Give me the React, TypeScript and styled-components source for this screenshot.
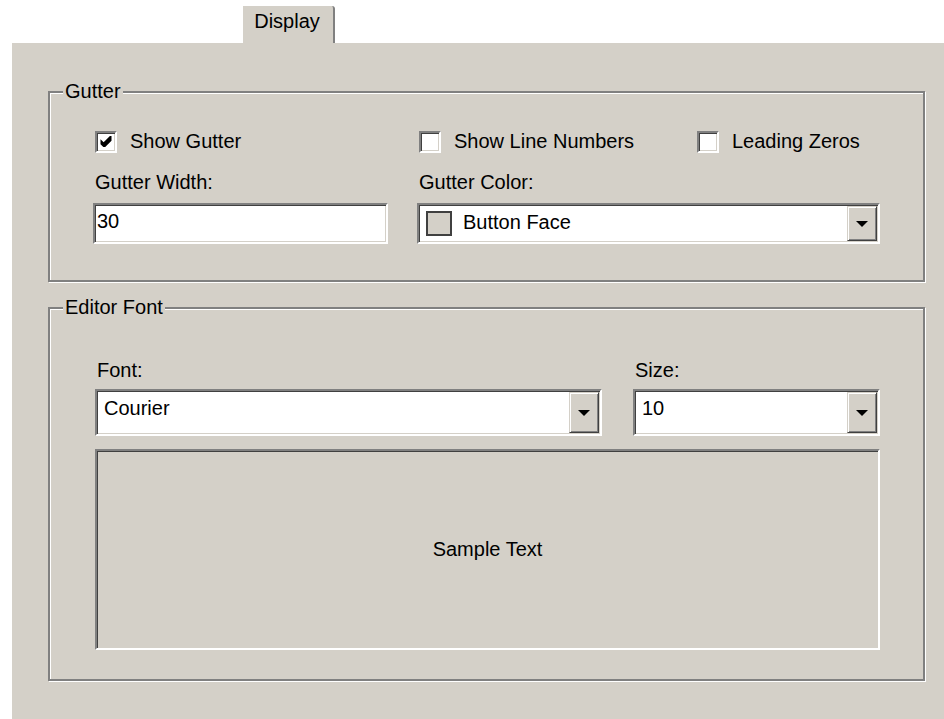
import React from "react";
import styled, { createGlobalStyle, css } from "styled-components";

const GlobalStyle = createGlobalStyle`
  html, body {
    margin: 0;
    padding: 0;
    background: #ffffff;
  }
  body {
    font-family: "Liberation Sans", Arial, sans-serif;
    font-size: 20px;
    color: #000000;
  }
`;

const FACE = "#d4d0c8";

/* Classic 3D sunken client edge: grey/black on top-left, white/face on bottom-right */
const sunken = css`
  box-sizing: border-box;
  border: 2px solid;
  border-color: #808080 #ffffff #ffffff #808080;
  box-shadow: inset 1px 1px 0 #404040, inset -1px -1px 0 ${FACE};
  padding: 1px;
`;

const Window = styled.div`
  width: 944px;
  height: 719px;
  display: flex;
  flex-direction: column;
  overflow: hidden;
  background: #ffffff;
`;

const TabStrip = styled.div`
  height: 43px;
  box-sizing: border-box;
  padding-left: 243px;
  display: flex;
  align-items: flex-end;
`;

const Tab = styled.div`
  width: 92px;
  height: 37px;
  box-sizing: border-box;
  background: ${FACE};
  border-right: 2px solid #808080;
  border-top-right-radius: 3px;
  padding-top: 4px;
  padding-right: 2px;
  line-height: 23px;
  text-align: center;
`;

const Panel = styled.div`
  flex: 1;
  margin-left: 12px;
  background: ${FACE};
  box-sizing: border-box;
  padding: 37px 0 0 36px;
  display: flex;
  flex-direction: column;
`;

const GroupBox = styled.fieldset<{ $gapTop?: number }>`
  width: 877px;
  box-sizing: border-box;
  margin: ${(p) => p.$gapTop ?? 0}px 0 0 0;
  padding: 0;
  min-width: 0;
  border: 2px solid #808080;
  box-shadow: inset 1px 1px 0 #ffffff, 1px 1px 0 #ffffff;
`;

const Caption = styled.legend`
  margin-left: 13px;
  padding: 0 2px;
  line-height: 23px;
  background: ${FACE};
`;

const GutterGrid = styled.div`
  display: grid;
  grid-template-columns: 324px 278px 185px;
  padding: 27px 0 36px 43px;
`;

const FontGrid = styled.div`
  display: grid;
  grid-template-columns: 507px 247px;
  column-gap: 31px;
  padding: 40px 0 29px 45px;
`;

const CheckItem = styled.label`
  display: flex;
  align-items: center;
  gap: 13px;
  height: 23px;
  margin-left: 2px;
  line-height: 23px;
  white-space: nowrap;
`;

const CheckBox = styled.span`
  ${sunken};
  width: 22px;
  height: 22px;
  background: #ffffff;
  display: flex;
  align-items: center;
  justify-content: center;
  flex: none;
`;

const FieldLabel = styled.div<{ $top?: number; $span?: boolean }>`
  line-height: 23px;
  margin: ${(p) => p.$top ?? 0}px 0 0 2px;
  ${(p) => p.$span && "grid-column: span 2;"}
`;

const EditBox = styled.div<{ $w: number }>`
  ${sunken};
  width: ${(p) => p.$w}px;
  height: 41px;
  margin-top: 9px;
  background: #ffffff;
  padding-top: 5px;
  line-height: 23px;
  padding-left: 2px;
`;

const Combo = styled.div<{ $h: number; $top: number; $span?: boolean }>`
  ${sunken};
  height: ${(p) => p.$h}px;
  margin-top: ${(p) => p.$top}px;
  background: #ffffff;
  display: flex;
  ${(p) => p.$span && "grid-column: span 2;"}
`;

const ComboValue = styled.div`
  flex: 1;
  display: flex;
  align-items: flex-start;
  gap: 11px;
  padding: 5px 0 0 6px;
  line-height: 23px;
`;

const Swatch = styled.span<{ $color: string }>`
  width: 26px;
  height: 25px;
  box-sizing: border-box;
  border: 2px solid #404040;
  background: ${(p) => p.$color};
  flex: none;
`;

const DropButton = styled.div`
  width: 30px;
  box-sizing: border-box;
  background: ${FACE};
  border: 1px solid;
  border-color: ${FACE} #404040 #404040 ${FACE};
  box-shadow: inset 1px 1px 0 #ffffff, inset -1px -1px 0 #808080;
  display: flex;
  align-items: center;
  justify-content: center;
  flex: none;
`;

const Arrow = styled.span`
  width: 0;
  height: 0;
  border-left: 6px solid transparent;
  border-right: 6px solid transparent;
  border-top: 6px solid #000000;
  margin-top: 1px;
`;

const SampleBox = styled.div`
  ${sunken};
  grid-column: 1 / -1;
  height: 201px;
  margin-top: 13px;
  background: ${FACE};
  display: flex;
  align-items: center;
  justify-content: center;
  line-height: 23px;
`;

/* Pixel-style tick, drawn on a 7x7 grid and scaled up */
const CheckMark = () => (
  <svg width="12" height="11" viewBox="0 0 7 7" aria-hidden="true">
    <polygon points="0,2 2,4 6,0 7,0 7,3 3,7 1.8,7 0,5.2" fill="#000" />
  </svg>
);

const Check = ({ checked, children }: { checked?: boolean; children: React.ReactNode }) => (
  <CheckItem>
    <CheckBox>{checked && <CheckMark />}</CheckBox>
    {children}
  </CheckItem>
);

const Drop = () => (
  <DropButton>
    <Arrow />
  </DropButton>
);

export default function App() {
  return (
    <>
      <GlobalStyle />
      <Window>
        <TabStrip>
          <Tab>Display</Tab>
        </TabStrip>
        <Panel>
          <GroupBox>
            <Caption>Gutter</Caption>
            <GutterGrid>
              <Check checked>Show Gutter</Check>
              <Check>Show Line Numbers</Check>
              <Check>Leading Zeros</Check>

              <FieldLabel $top={18}>Gutter Width:</FieldLabel>
              <FieldLabel $top={18} $span>
                Gutter Color:
              </FieldLabel>

              <EditBox $w={295}>30</EditBox>
              <Combo $h={41} $top={9} $span>
                <ComboValue>
                  <Swatch $color={FACE} />
                  Button Face
                </ComboValue>
                <Drop />
              </Combo>
            </GutterGrid>
          </GroupBox>

          <GroupBox $gapTop={14}>
            <Caption>Editor Font</Caption>
            <FontGrid>
              <FieldLabel>Font:</FieldLabel>
              <FieldLabel>Size:</FieldLabel>
              <Combo $h={47} $top={7}>
                <ComboValue>Courier</ComboValue>
                <Drop />
              </Combo>
              <Combo $h={47} $top={7}>
                <ComboValue>10</ComboValue>
                <Drop />
              </Combo>
              <SampleBox>Sample Text</SampleBox>
            </FontGrid>
          </GroupBox>
        </Panel>
      </Window>
    </>
  );
}
